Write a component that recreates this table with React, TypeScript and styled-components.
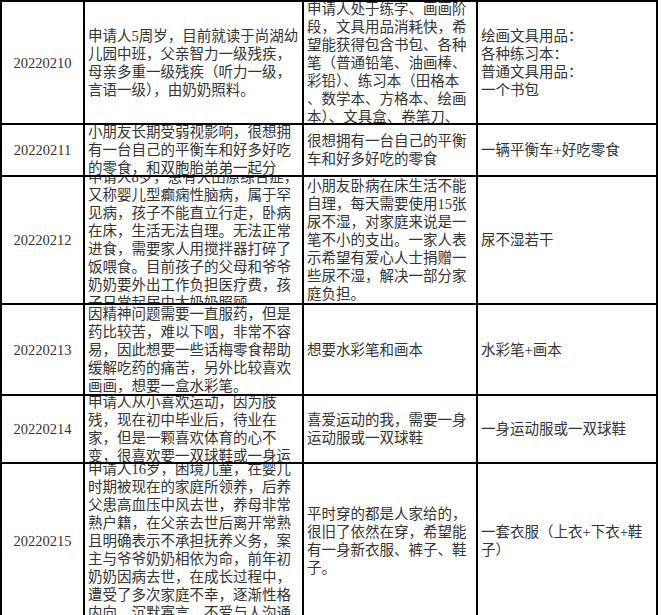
import React from "react";
import styled, { createGlobalStyle } from "styled-components";

const Global = createGlobalStyle`
  html, body {
    margin: 0;
    padding: 0;
    background: #fff;
    overflow: hidden;
  }
`;

const Table = styled.div`
  display: grid;
  grid-template-columns: 81px 217px 172px 178px;
  grid-template-rows: 121px 50px 126px 89px 66px 153px;
  gap: 2px;
  padding: 2px;
  background: #000;
  width: max-content;
  font-family: "Liberation Serif", "Noto Sans CJK SC", serif;
  font-size: 14.5px;
  color: #333;
`;

const Cell = styled.div<{ $center?: boolean }>`
  background: #fff;
  overflow: hidden;
  display: flex;
  align-items: center;
  justify-content: ${(p) => (p.$center ? "center" : "flex-start")};
  padding: 0 3px;
`;

const Lines = styled.div`
  line-height: 18px;
  white-space: pre;
  flex: none;
`;

type Row = { id: string; desc: string[]; wish: string[]; item: string[] };

const rows: Row[] = [
  {
    id: "20220210",
    desc: [
      "申请人5周岁，目前就读于尚湖幼",
      "儿园中班，父亲智力一级残疾，",
      "母亲多重一级残疾（听力一级，",
      "言语一级），由奶奶照料。",
    ],
    wish: [
      "申请人处于练字、画画阶",
      "段，文具用品消耗快，希",
      "望能获得包含书包、各种",
      "笔（普通铅笔、油画棒、",
      "彩铅）、练习本（田格本",
      "、数学本、方格本、绘画",
      "本）、文具盒、卷笔刀、",
    ],
    item: ["绘画文具用品：", "各种练习本：", "普通文具用品：", "一个书包"],
  },
  {
    id: "20220211",
    desc: [
      "小朋友长期受弱视影响，很想拥",
      "有一台自己的平衡车和好多好吃",
      "的零食，和双胞胎弟弟一起分",
    ],
    wish: ["很想拥有一台自己的平衡", "车和好多好吃的零食"],
    item: ["一辆平衡车+好吃零食"],
  },
  {
    id: "20220212",
    desc: [
      "申请人8岁，患有大田原综合症，",
      "又称婴儿型癫痫性脑病，属于罕",
      "见病，孩子不能直立行走，卧病",
      "在床，生活无法自理。无法正常",
      "进食，需要家人用搅拌器打碎了",
      "饭喂食。目前孩子的父母和爷爷",
      "奶奶要外出工作负担医疗费，孩",
      "子日常起居由太奶奶照顾。",
    ],
    wish: [
      "小朋友卧病在床生活不能",
      "自理，每天需要使用15张",
      "尿不湿，对家庭来说是一",
      "笔不小的支出。一家人表",
      "示希望有爱心人士捐赠一",
      "些尿不湿，解决一部分家",
      "庭负担。",
    ],
    item: ["尿不湿若干"],
  },
  {
    id: "20220213",
    desc: [
      "因精神问题需要一直服药，但是",
      "药比较苦，难以下咽，非常不容",
      "易，因此想要一些话梅零食帮助",
      "缓解吃药的痛苦，另外比较喜欢",
      "画画，想要一盒水彩笔。",
    ],
    wish: ["想要水彩笔和画本"],
    item: ["水彩笔+画本"],
  },
  {
    id: "20220214",
    desc: [
      "申请人从小喜欢运动，因为肢",
      "残，现在初中毕业后，待业在",
      "家，但是一颗喜欢体育的心不",
      "变，很喜欢要一双球鞋或一身运",
    ],
    wish: ["喜爱运动的我，需要一身", "运动服或一双球鞋"],
    item: ["一身运动服或一双球鞋"],
  },
  {
    id: "20220215",
    desc: [
      "申请人16岁，困境儿童，在婴儿",
      "时期被现在的家庭所领养，后养",
      "父患高血压中风去世，养母非常",
      "熟户籍，在父亲去世后离开常熟",
      "且明确表示不承担抚养义务，案",
      "主与爷爷奶奶相依为命，前年初",
      "奶奶因病去世，在成长过程中，",
      "遭受了多次家庭不幸，逐渐性格",
      "内向，沉默寡言，不爱与人沟通",
    ],
    wish: [
      "平时穿的都是人家给的，",
      "很旧了依然在穿，希望能",
      "有一身新衣服、裤子、鞋",
      "子。",
    ],
    item: ["一套衣服（上衣+下衣+鞋", "子）"],
  },
];

const TextCell: React.FC<{ lines: string[]; center?: boolean }> = ({ lines, center }) => (
  <Cell $center={center}>
    <Lines>{lines.join("\n")}</Lines>
  </Cell>
);

export default function App() {
  return (
    <>
      <Global />
      <Table>
        {rows.map((r) => (
          <React.Fragment key={r.id}>
            <TextCell lines={[r.id]} center />
            <TextCell lines={r.desc} />
            <TextCell lines={r.wish} />
            <TextCell lines={r.item} />
          </React.Fragment>
        ))}
      </Table>
    </>
  );
}
